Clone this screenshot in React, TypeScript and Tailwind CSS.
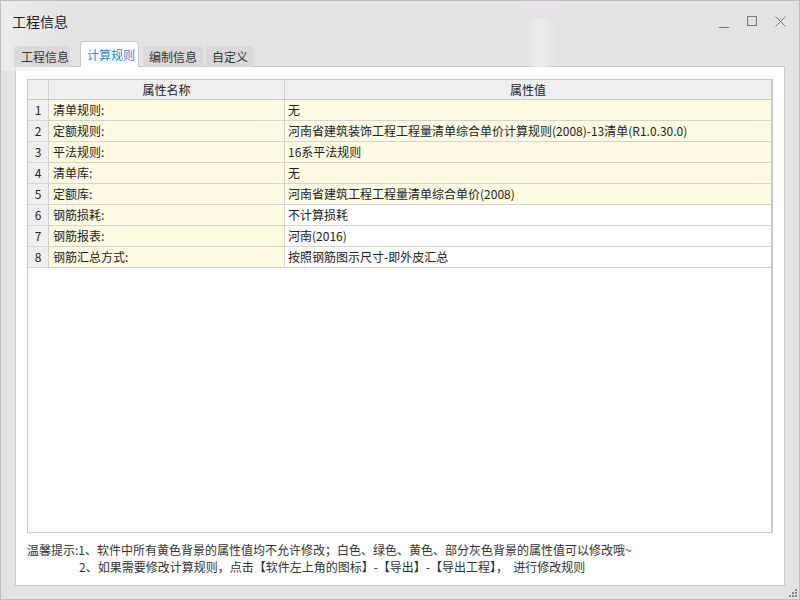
import React from 'react';

const rows = [
    { name: '清单规则:', value: '无', locked: true },
    { name: '定额规则:', value: '河南省建筑装饰工程工程量清单综合单价计算规则(2008)-13清单(R1.0.30.0)', locked: true },
    { name: '平法规则:', value: '16系平法规则', locked: true },
    { name: '清单库:', value: '无', locked: true },
    { name: '定额库:', value: '河南省建筑工程工程量清单综合单价(2008)', locked: true },
    { name: '钢筋损耗:', value: '不计算损耗', locked: false },
    { name: '钢筋报表:', value: '河南(2016)', locked: false },
    { name: '钢筋汇总方式:', value: '按照钢筋图示尺寸-即外皮汇总', locked: false },
];

export default function App() {
    return (
        <div
            className="relative w-[800px] h-[600px] overflow-hidden bg-[#e3e3e3] border border-[#bdbdbd] text-[#222] flex flex-col"
            style={{ fontFamily: '"Noto Sans CJK SC", "Noto Sans", sans-serif' }}
        >
            {/* acrylic glow */}
            <div className="absolute left-[0px] top-0 w-[70px] h-[70px] bg-gradient-to-r from-[#ececec] to-transparent pointer-events-none" />
            <div className="absolute left-[525px] top-[18px] w-[30px] h-[48px] bg-gradient-to-r from-transparent via-[#eeeeee] to-transparent pointer-events-none" />
            <div className="absolute left-[520px] top-0 w-[40px] h-[14px] bg-gradient-to-b from-[#ebe3f0] to-transparent pointer-events-none" />

            {/* title bar */}
            <div className="relative h-[40px] flex items-center justify-between pl-[11px] pr-[13px]">
                <span className="text-[14px] leading-none text-[#222]">工程信息</span>
                <div className="flex items-center gap-[18px] text-[#777]">
                    <svg width="10" height="10" viewBox="0 0 10 10" className="mt-[6px]">
                        <line x1="0" y1="8.5" x2="10" y2="8.5" stroke="#777" strokeWidth="1" />
                    </svg>
                    <svg width="10" height="10" viewBox="0 0 10 10">
                        <rect x="0.5" y="0.5" width="9" height="9" fill="none" stroke="#777" strokeWidth="1" />
                    </svg>
                    <svg width="11" height="11" viewBox="0 0 11 11">
                        <path d="M0.5 0.5L10.5 10.5M10.5 0.5L0.5 10.5" stroke="#777" strokeWidth="1" />
                    </svg>
                </div>
            </div>

            {/* tabs */}
            <div className="relative flex items-end h-[26px] pl-[13px]">
                <div className="w-[56px] h-[21px] pl-[7px] bg-[#d9d9d9] rounded-t-[3px] flex items-center text-[12px] text-[#333] whitespace-nowrap overflow-visible">
                    工程信息
                </div>
                <div className="relative z-10 ml-[10px] w-[59px] h-[26px] pl-[6px] bg-white border border-[#c8c8c8] border-b-0 rounded-t-[4px] flex items-center text-[12px] text-[#2b86e0] whitespace-nowrap">
                    计算规则
                </div>
                <div className="ml-[4px] w-[60px] h-[21px] pl-[6px] bg-[#d9d9d9] rounded-t-[3px] flex items-center text-[12px] text-[#333] whitespace-nowrap">
                    编制信息
                </div>
                <div className="ml-[3px] w-[47px] h-[21px] pl-[6px] bg-[#d9d9d9] rounded-t-[3px] flex items-center text-[12px] text-[#333] whitespace-nowrap">
                    自定义
                </div>
            </div>

            {/* panel */}
            <div className="mx-[14px] -mt-[1px] h-[520px] bg-white border border-[#c8c8c8] pt-[12px] px-[11px] flex flex-col">
                <div className="h-[454px] border border-[#c8c8c8] border-r-2 text-[12px]">
                    <div className="grid grid-cols-[21px_236px_1fr] bg-[#efefef] h-[20px] border-b border-[#c8c8c8]">
                        <div className="border-r border-[#d0d0d0]" />
                        <div className="border-r border-[#d0d0d0] flex items-center justify-center">属性名称</div>
                        <div className="flex items-center justify-center">属性值</div>
                    </div>
                    {rows.map((r, i) => (
                        <div key={i} className="grid grid-cols-[21px_236px_1fr] h-[21px] border-b border-[#d4d4d4]">
                            <div className="bg-[#efefef] border-r border-[#d0d0d0] flex items-center justify-center">{i + 1}</div>
                            <div className="bg-[#fffbe3] border-r border-[#d4d4d4] flex items-center pl-[4px]">{r.name}</div>
                            <div className={`${r.locked ? 'bg-[#fffbe3]' : 'bg-white'} flex items-center pl-[3px] whitespace-nowrap`}>{r.value}</div>
                        </div>
                    ))}
                </div>
                <div className="mt-[8px] text-[12px] leading-[17px] text-[#333] whitespace-pre">
                    <div>温馨提示:1、软件中所有黄色背景的属性值均不允许修改；白色、绿色、黄色、部分灰色背景的属性值可以修改哦~</div>
                    <div className="pl-[52px]">2、如果需要修改计算规则，点击【软件左上角的图标】-【导出】-【导出工程】，  进行修改规则</div>
                </div>
            </div>

            {/* resize grip */}
            <svg className="absolute right-[2px] bottom-[2px]" width="8" height="8" viewBox="0 0 8 8">
                <rect x="6" y="0" width="2" height="2" fill="#888" />
                <rect x="3" y="3" width="2" height="2" fill="#888" />
                <rect x="6" y="3" width="2" height="2" fill="#888" />
                <rect x="0" y="6" width="2" height="2" fill="#888" />
                <rect x="3" y="6" width="2" height="2" fill="#888" />
                <rect x="6" y="6" width="2" height="2" fill="#888" />
            </svg>
        </div>
    );
}
